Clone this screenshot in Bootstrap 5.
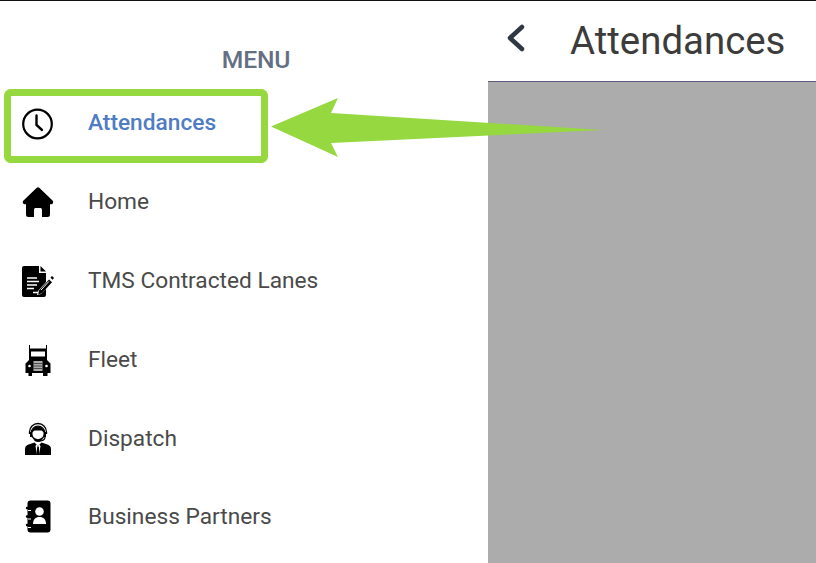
<!DOCTYPE html>
<html lang="en">
<head>
  <meta charset="UTF-8" />
  <meta name="viewport" content="width=device-width, initial-scale=1.0"/>
  <title>Attendances</title>
  <link href="https://cdn.jsdelivr.net/npm/bootstrap@5.3.3/dist/css/bootstrap.min.css" rel="stylesheet" />
  <style>
    html, body { height: 100%; overflow: hidden; }
    body { background: #fff; font-family: Roboto, sans-serif; border-top: 1px solid #111; position: relative; }
    .side-pane { width: 488px; flex: none; }
    .menu-title { height: 83px; padding: 44px 0 0 24px; font-size: 24.7px; line-height: 30px; font-weight: 500; color: #646e84; text-align: center; letter-spacing: -.2px; }
    .menu-row { height: 78.8px; padding-left: 21px; color: #4a4a4a; font-size: 22.7px; text-decoration: none; }
    .menu-row.is-active { color: #4f7cc4; font-weight: 500; }
    .menu-icon { width: 34px; height: 34px; margin-right: 33px; flex: none; }
    .clock-icon { margin-top: 2px; }
    .main-pane { min-width: 0; }
    .top-head { height: 81px; border-bottom: 1px solid #5d5a80; padding-left: 18px; }
    .back-link { width: 20px; margin-right: 45px; margin-top: -6px; }
    .head-title { font-size: 38.4px; font-weight: 400; color: #3c3c3c; margin: 0 0 0 -1px; line-height: 1; }
    .grey-area { background: #acacac; }
    .note-overlay { position: absolute; top: -1px; left: 0; pointer-events: none; }
  </style>
</head>
<body>
  <div class="d-flex h-100">
    <!-- menu -->
    <nav class="side-pane">
      <div class="menu-title">MENU</div>
      <a class="menu-row is-active d-flex align-items-center" href="#">
        <svg class="menu-icon clock-icon" viewBox="0 0 34 34" fill="none" stroke="#000" stroke-width="2.2"><circle cx="16.500" cy="17" r="14.300"/><path d="M15.500 8.500V18l5.500 5" stroke-linecap="round" stroke-width="2.400"/></svg>
        <span>Attendances</span>
      </a>
      <a class="menu-row d-flex align-items-center" href="#">
        <svg class="menu-icon" viewBox="0 0 34 34"><path d="M15.500 3a2.200 2.200 0 0 1 3 0L31.500 15.500c1.500 1.500.5 3.800-1.500 3.800H29V29.500a2.500 2.500 0 0 1-2.500 2.500H21V24.500a1.500 1.500 0 0 0-1.500-1.500H14.500a1.500 1.500 0 0 0-1.500 1.500V32H7.500A2.500 2.500 0 0 1 5 29.500V19.300H4c-2 0-3-2.300-1.500-3.800Z"/></svg>
        <span>Home</span>
      </a>
      <a class="menu-row d-flex align-items-center" href="#">
        <svg class="menu-icon" viewBox="0 0 34 34"><path d="M1 4a2 2 0 0 1 2-2H18V9h7v9L17 27l-1 4 4-1 5-5v6a2 2 0 0 1-2 2H3a2 2 0 0 1-2-2Z"/><path d="M19.500 2L25 7.500h-5.500Z"/><path d="M6 14h10M6 17.500h12M6 21h10M6 24.500h7M12 28.500h7" stroke="#fff" stroke-width="1.500"/><path d="M18 26.500L28 15.500l3 2.700-10 11-3.800 1.200Z"/><path d="M20 26l7.800-8.500" stroke="#fff" stroke-width="1"/><path d="M29.500 13.500l1.500-1.500 2 2-1.500 1.800Z"/></svg>
        <span>TMS Contracted Lanes</span>
      </a>
      <a class="menu-row d-flex align-items-center" href="#">
        <svg class="menu-icon" viewBox="0 0 34 34"><path d="M8 2h1v3.500h16V2h1v15l3.500 3.500V30h-3v3h-4.500v-3h-11v3H7.500v-3h-3V20.500L8 17Z"/><path d="M10 8.500h14v5H10Z" fill="#fff"/><path d="M12.500 18h9v10h-9Z" fill="#aaa"/><path d="M12.500 20.500h9M12.500 23h9M12.500 25.500h9" stroke="#333" stroke-width=".8"/><circle cx="8.500" cy="23" r="1.300" fill="#fff"/><circle cx="25.500" cy="23" r="1.300" fill="#fff"/></svg>
        <span>Fleet</span>
      </a>
      <a class="menu-row d-flex align-items-center" href="#">
        <svg class="menu-icon" viewBox="0 0 34 34"><path d="M4 33v-6c0-3 2-4 5-5l4.500-1.500L17 24l3.500-3.500L25 22c3 1 5 2 5 5v6Z"/><path d="M15.500 22.500L17 24l1.500-1.500 1 1.500L18 33h-2l-1.500-9Z" fill="#fff"/><path d="M16.200 24.500h1.600l.7 8.500h-3Z"/><circle cx="17" cy="11" r="6.800" fill="#fff" stroke="#000" stroke-width="1.300"/><path d="M10.500 11a6.500 6.500 0 0 1 13 0l-3-2.500h-7Z"/><path d="M8.500 12V10a8.500 8.500 0 0 1 17 0v2" fill="none" stroke="#000" stroke-width="1.300"/><path d="M9 10h2.500v5H9ZM22.500 10H25v5h-2.500Z"/><path d="M24 15c0 3-3 4-6 4" fill="none" stroke="#000" stroke-width="1.200"/><path d="M12 16c1 3 3 4 5 4s4-1 5-4c-1 1.500-3 2-5 2s-4-.5-5-2Z"/></svg>
        <span>Dispatch</span>
      </a>
      <a class="menu-row d-flex align-items-center" href="#">
        <svg class="menu-icon" viewBox="0 0 34 34"><path d="M6.500 3.500a3 3 0 0 1 3-3H26.500a3 3 0 0 1 3 3v26a3 3 0 0 1-3 3H9.500a3 3 0 0 1-3-3Z"/><path d="M6 8h3M6 16.500h3M6 25h3" stroke="#000" stroke-width="2.400" stroke-linecap="round"/><path d="M7 10.500h3M7 19h3M7 27.500h3" stroke="#fff" stroke-width="1"/><circle cx="18.500" cy="11.500" r="4.300" fill="#fff"/><path d="M12 24c0-4.500 2.500-7 6.500-7s6.500 2.500 6.500 7Z" fill="#fff"/></svg>
        <span>Business Partners</span>
      </a>
    </nav>

    <!-- page -->
    <main class="main-pane flex-grow-1 d-flex flex-column">
      <header class="top-head d-flex align-items-center">
        <div class="back-link">
          <svg width="20" height="28" viewBox="0 0 20 28" fill="none" stroke="#2f3842" stroke-width="4.500" stroke-linecap="round" stroke-linejoin="round"><path d="M16 3L4 14l12 11"/></svg>
        </div>
        <h1 class="head-title">Attendances</h1>
      </header>
      <div class="grey-area flex-grow-1"></div>
    </main>
  </div>

  <!-- callout drawn on top of the screenshot -->
  <svg class="note-overlay" width="816" height="563" viewBox="0 0 816 563">
    <rect x="7.500" y="92.500" width="257" height="67" rx="3" fill="none" stroke="#96d83f" stroke-width="7"/>
    <path d="M271 126.500L338 98l-7 15 272 17-272 13 7 14Z" fill="#96d83f"/>
  </svg>

  <script src="https://cdn.jsdelivr.net/npm/bootstrap@5.3.3/dist/js/bootstrap.bundle.min.js"></script>
</body>
</html>
